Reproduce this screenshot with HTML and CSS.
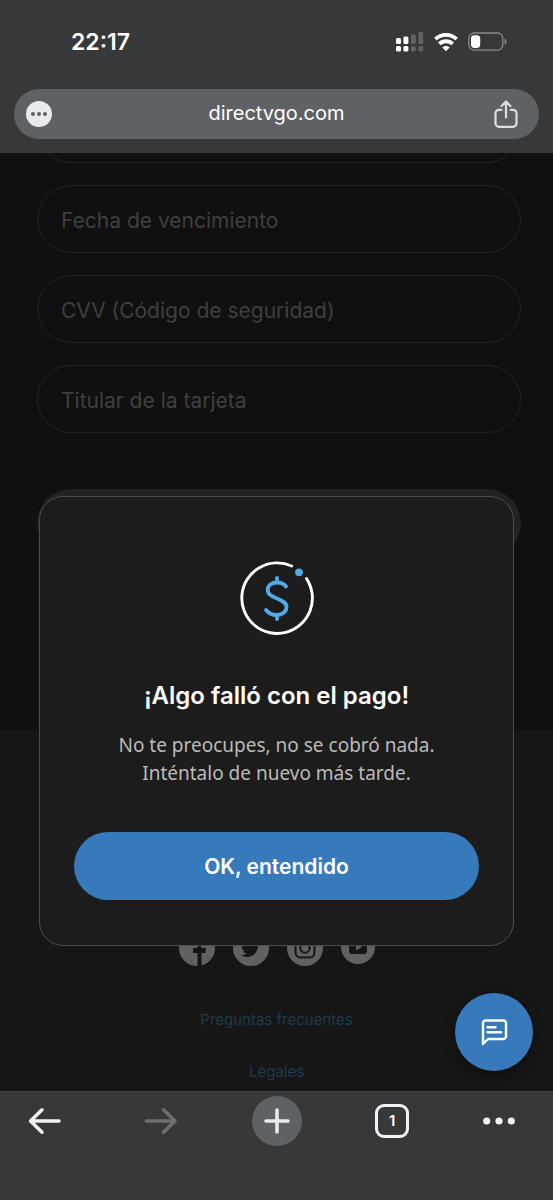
FILE: index.html
```
<!DOCTYPE html>
<html lang="es">
<head>
<meta charset="utf-8">
<meta name="viewport" content="width=device-width, initial-scale=1">
<title>directvgo.com</title>
<link rel="stylesheet" href="styles.css">
</head>
<body>
<header class="browser-top">
  <div class="status">
    <span class="clock">22:17</span>
    <div class="status-icons">
      <svg class="signal" width="28" height="20" viewBox="0 0 28 20" aria-hidden="true">
        <g fill="#fff"><rect x="0" y="6" width="5" height="6" rx="1.5"/><rect x="7.4" y="4.6" width="5" height="7.4" rx="1.5"/><rect x="0" y="14" width="5" height="5.4" rx="1.5"/><rect x="7.4" y="14" width="5" height="5.4" rx="1.5"/></g>
        <g fill="#626365"><rect x="15" y="2.4" width="4.8" height="9.6" rx="1.5"/><rect x="22.4" y="0" width="4.8" height="12" rx="1.5"/><rect x="15" y="14" width="4.8" height="5.4" rx="1.5"/><rect x="22.4" y="14" width="4.8" height="5.4" rx="1.5"/></g>
      </svg>
      <svg class="wifi" width="24" height="20" viewBox="0 0 24 20" fill="none" stroke="#fff" stroke-width="3.8" aria-hidden="true">
        <path d="M1.4 7.1a15.4 15.4 0 0 1 21.2 0"/><path d="M5.3 11.9a9.8 9.8 0 0 1 13.4 0"/><path d="M12 19.2l-3.7-3.8a5.4 5.4 0 0 1 7.4 0z" fill="#fff" stroke="none"/>
      </svg>
      <svg class="battery" width="39" height="20" viewBox="0 0 39 20" aria-hidden="true">
        <rect x=".8" y="1" width="34" height="17.2" rx="5.5" fill="none" stroke="#8a8b8c" stroke-width="1.3"/><rect x="3" y="3.2" width="9.2" height="12.8" rx="3.4" fill="#fff"/><path d="M36.6 6.5c2.6 1 2.6 5.2 0 6.2z" fill="#8a8b8c"/>
      </svg>
    </div>
  </div>
  <div class="address">
    <button class="address-button" type="button" aria-label="Opciones de la página">
      <svg width="26" height="26" viewBox="0 0 26 26"><circle cx="13" cy="13" r="13" fill="#e8eaed"/><g fill="#5f6265"><circle cx="7" cy="13" r="2"/><circle cx="13" cy="13" r="2"/><circle cx="19" cy="13" r="2"/></g></svg>
    </button>
    <span class="domain">directvgo.com</span>
    <button class="address-button" type="button" aria-label="Compartir">
      <svg width="24" height="28" viewBox="0 0 24 28" fill="none" stroke="#dcdee0" stroke-width="2.2" stroke-linecap="round" stroke-linejoin="round"><path d="M7.3 9.800H5A3.500 3.500 0 0 0 1.500 13.300v10A3.500 3.500 0 0 0 5 26.800h14a3.500 3.500 0 0 0 3.500-3.500v-10A3.500 3.500 0 0 0 19 9.800h-2.300M12 17.500V2.200M7.600 6L12 1.600 16.400 6"/></svg>
    </button>
  </div>
</header>

<main class="page">
  <form class="card-form">
    <input class="field" type="text" aria-label="Número de tarjeta">
    <input class="field" type="text" aria-label="Fecha de vencimiento" placeholder="Fecha de vencimiento">
    <input class="field" type="text" aria-label="CVV (Código de seguridad)" placeholder="CVV (Código de seguridad)">
    <input class="field" type="text" aria-label="Titular de la tarjeta" placeholder="Titular de la tarjeta">
    <button class="pay" type="button" aria-label="Pagar"></button>
  </form>
  <footer class="site-footer">
    <nav class="social" aria-label="Redes sociales">
      <a href="#" aria-label="Facebook"><svg width="36" height="36" viewBox="0 0 36 36"><circle cx="18" cy="18" r="18" fill="#616161"/><path d="M18.500 36V23h-4.500v-5h4.500v-4c0-4 2.500-6 6-6h2v5h-2c-1.500 0-2 .8-2 2v3h4.500l-.7 5h-3.800v13z" fill="#161616"/></svg></a>
      <a href="#" aria-label="Twitter"><svg width="36" height="36" viewBox="0 0 36 36"><circle cx="18" cy="18" r="18" fill="#616161"/><path d="M27.500 11.500l-2.300 2.500c.4 7.500-5 13-11 13-2.500 0-4.500-.6-6.200-1.700 2.300.1 4.200-.5 5.700-1.700-2-.2-3.200-1.300-3.700-2.800h1.700c-2-.7-3.200-2-3.200-4l1.700.5c-2-1.500-2.200-3.500-1.200-5.500 2.200 2.600 5 4.100 8.500 4.300-.6-3 1.200-5.600 4-5.600 1.200 0 2.200.5 3 1.300l2.500-1-1.500 2z" fill="#161616"/></svg></a>
      <a href="#" aria-label="Instagram"><svg width="36" height="36" viewBox="0 0 36 36"><circle cx="18" cy="18" r="18" fill="#616161"/><g fill="none" stroke="#161616" stroke-width="2"><rect x="8.500" y="8.500" width="19" height="19" rx="5"/><circle cx="18" cy="18" r="4.700"/></g><circle cx="23.200" cy="12.800" r="1.200" fill="#161616"/></svg></a>
      <a href="#" aria-label="YouTube"><svg width="34" height="34" viewBox="0 0 34 34"><circle cx="17" cy="17" r="17" fill="#616161"/><rect x="8" y="10" width="18" height="14" rx="3" fill="#161616"/><path d="M15 13.500v7l6-3.500z" fill="#616161"/></svg></a>
    </nav>
    <nav class="footer-links" aria-label="Enlaces">
      <a href="#">Preguntas frecuentes</a>
      <a href="#">Legales</a>
    </nav>
  </footer>

  <div class="overlay">
    <section class="modal" role="dialog" aria-modal="true" aria-labelledby="modal-title">
      <svg class="modal-icon" width="74" height="74" viewBox="0 0 74 74" fill="none" stroke-linecap="round" aria-hidden="true">
        <path d="M66.500 17.600A35.300 35.300 0 1 1 51.700 5" stroke="#fff" stroke-width="2.900"/>
        <circle cx="59" cy="11.300" r="3.900" fill="#52a9e8"/>
        <path d="M46 25.500C44 22.800 41 21.500 37 21.500c-5.500 0-9.300 3-9.300 7.200 0 4.800 4 6.600 9.300 8.700 5.300 2.100 9.500 4.200 9.500 8.700 0 4.700-4.300 7.900-9.500 7.900-4.700 0-8.700-2-11-5M37 17v4M37 54v4" stroke="#52a9e8" stroke-width="3.800"/>
      </svg>
      <h1 class="modal-title" id="modal-title">¡Algo falló con el pago!</h1>
      <p class="modal-text">No te preocupes, no se cobró nada.<br>Inténtalo de nuevo más tarde.</p>
      <button class="confirm" type="button">OK, entendido</button>
    </section>
  </div>
  <button class="chat" type="button" aria-label="Abrir chat">
    <svg width="28" height="28" viewBox="0 0 28 28" fill="none" stroke="#fff" stroke-width="2.400" stroke-linecap="round" stroke-linejoin="round"><path d="M3 26V5a2.500 2.500 0 0 1 2.500-2.500h18A2.500 2.500 0 0 1 26 5v13.500a2.500 2.500 0 0 1-2.500 2.500H8L3 26"/><path d="M7.500 9.300h8M7.500 14.300h13.500"/></svg>
  </button>
</main>

<nav class="toolbar" aria-label="Navegador">
  <button class="tool" type="button" aria-label="Atrás"><svg width="34" height="28" viewBox="0 0 34 28" fill="none" stroke="#f1f2f3" stroke-width="3.500" stroke-linecap="round" stroke-linejoin="round"><path d="M31 14H2.500M14 2.800L2.500 14 14 25.200"/></svg></button>
  <button class="tool" type="button" aria-label="Adelante"><svg width="34" height="28" viewBox="0 0 34 28" fill="none" stroke="#6d6e70" stroke-width="3.500" stroke-linecap="round" stroke-linejoin="round"><path d="M2.500 14H31M19.500 2.800L31 14 19.500 25.200"/></svg></button>
  <button class="tool tool-new" type="button" aria-label="Nueva pestaña"><svg width="28" height="28" viewBox="0 0 28 28" fill="none" stroke="#e8eaed" stroke-width="3.600" stroke-linecap="round"><path d="M14 3v22M3 14h22"/></svg></button>
  <button class="tool" type="button" aria-label="1 pestaña abierta"><span class="tab-count">1</span></button>
  <button class="tool tool-more" type="button" aria-label="Menú"><svg width="32" height="8" viewBox="0 0 32 8" fill="#f1f2f3"><circle cx="3.700" cy="4" r="3.600"/><circle cx="16" cy="4" r="3.600"/><circle cx="28.300" cy="4" r="3.600"/></svg></button>
</nav>
</body>
</html>
```

FILE: styles.css
```
* {
  box-sizing: border-box;
}

body {
  margin: 0;
  height: 100vh;
  display: flex;
  flex-direction: column;
  background: #101010;
  color: #fff;
  font-family: Inter, "Liberation Sans", sans-serif;
}

button {
  padding: 0;
  border: 0;
  background: none;
  color: inherit;
  font: inherit;
  cursor: pointer;
}

svg {
  display: block;
}

a {
  text-decoration: none;
}

.browser-top {
  padding: 24px 14px 14px;
  background: #373839;
}

.status {
  display: flex;
  align-items: center;
  justify-content: space-between;
  height: 35px;
  margin-bottom: 30px;
  padding: 0 32px 0 57px;
}

.clock {
  font-size: 23px;
  font-weight: 600;
}

.status-icons {
  display: flex;
  align-items: center;
  gap: 10px;
}

.address {
  display: flex;
  align-items: center;
  height: 50px;
  padding: 0 21px 0 12px;
  border-radius: 25px;
  background: #5f6265;
}

.domain {
  flex: 1;
  padding: 0 0 2px 7px;
  font-size: 20px;
  line-height: 28px;
  text-align: center;
}

.page {
  position: relative;
  flex: 1;
  min-height: 0;
  overflow: hidden;
}

.card-form {
  display: flex;
  flex-direction: column;
  gap: 22px;
  margin-top: -58px;
  padding: 0 32px 173px 37px;
}

.field {
  width: 100%;
  height: 68px;
  padding: 2px 23px 0;
  border: 1px solid #242424;
  border-radius: 34px;
  outline: 0;
  background: transparent;
  color: #fff;
  font-family: inherit;
  font-size: 21px;
}

.field::placeholder {
  color: #3f3f3f;
  opacity: 1;
}

.card-form .pay {
  height: 68px;
  margin-top: 34px;
  border-radius: 34px;
  background: #222;
}

.site-footer {
  display: flex;
  flex-direction: column;
  align-items: center;
  gap: 40px;
  min-height: 420px;
  padding-top: 200px;
  background: #161616;
}

.social {
  display: flex;
  gap: 18px;
}

.footer-links {
  display: flex;
  flex-direction: column;
  align-items: center;
  gap: 24px;
}

.footer-links a {
  color: #1f3b4d;
  font-size: 15px;
  line-height: 28px;
}

.overlay {
  position: absolute;
  inset: 0;
  display: flex;
  align-items: flex-end;
  padding: 0 39px 145px;
}

.modal {
  display: flex;
  flex: 1;
  flex-direction: column;
  align-items: center;
  padding: 64px 34px 45px;
  border: 1px solid #4b4b4b;
  border-radius: 24px;
  background: #1c1c1c;
  text-align: center;
}

.modal-title {
  margin: 45px 0 19px;
  font-size: 24px;
  font-weight: 600;
  line-height: 32px;
}

.modal-text {
  margin: 0 0 45px;
  color: #bababa;
  font-family: "Noto Sans", sans-serif;
  font-size: 19px;
  line-height: 28px;
}

.confirm {
  width: 100%;
  height: 68px;
  border-radius: 34px;
  background: #377abc;
  font-size: 21px;
  font-weight: 600;
}

.chat {
  position: absolute;
  right: 20px;
  bottom: 20px;
  display: grid;
  place-items: center;
  width: 78px;
  height: 78px;
  border-radius: 50%;
  background: #377abc;
  box-shadow: 0 4px 12px rgba(0, 0, 0, 0.4);
}

.toolbar {
  display: flex;
  justify-content: space-between;
  height: 109px;
  padding: 4px 20px 0;
  border-top: 1px solid #414243;
  background: #373839;
}

.tool {
  display: flex;
  align-items: center;
  justify-content: center;
  width: 50px;
  height: 50px;
}

.tool-new {
  border-radius: 50%;
  background: #5f6265;
}

.tool-more {
  justify-content: flex-start;
}

.tab-count {
  width: 34px;
  height: 34px;
  border: 3px solid #f1f2f3;
  border-radius: 9px;
  font-size: 15px;
  font-weight: 600;
  line-height: 28px;
}
```
